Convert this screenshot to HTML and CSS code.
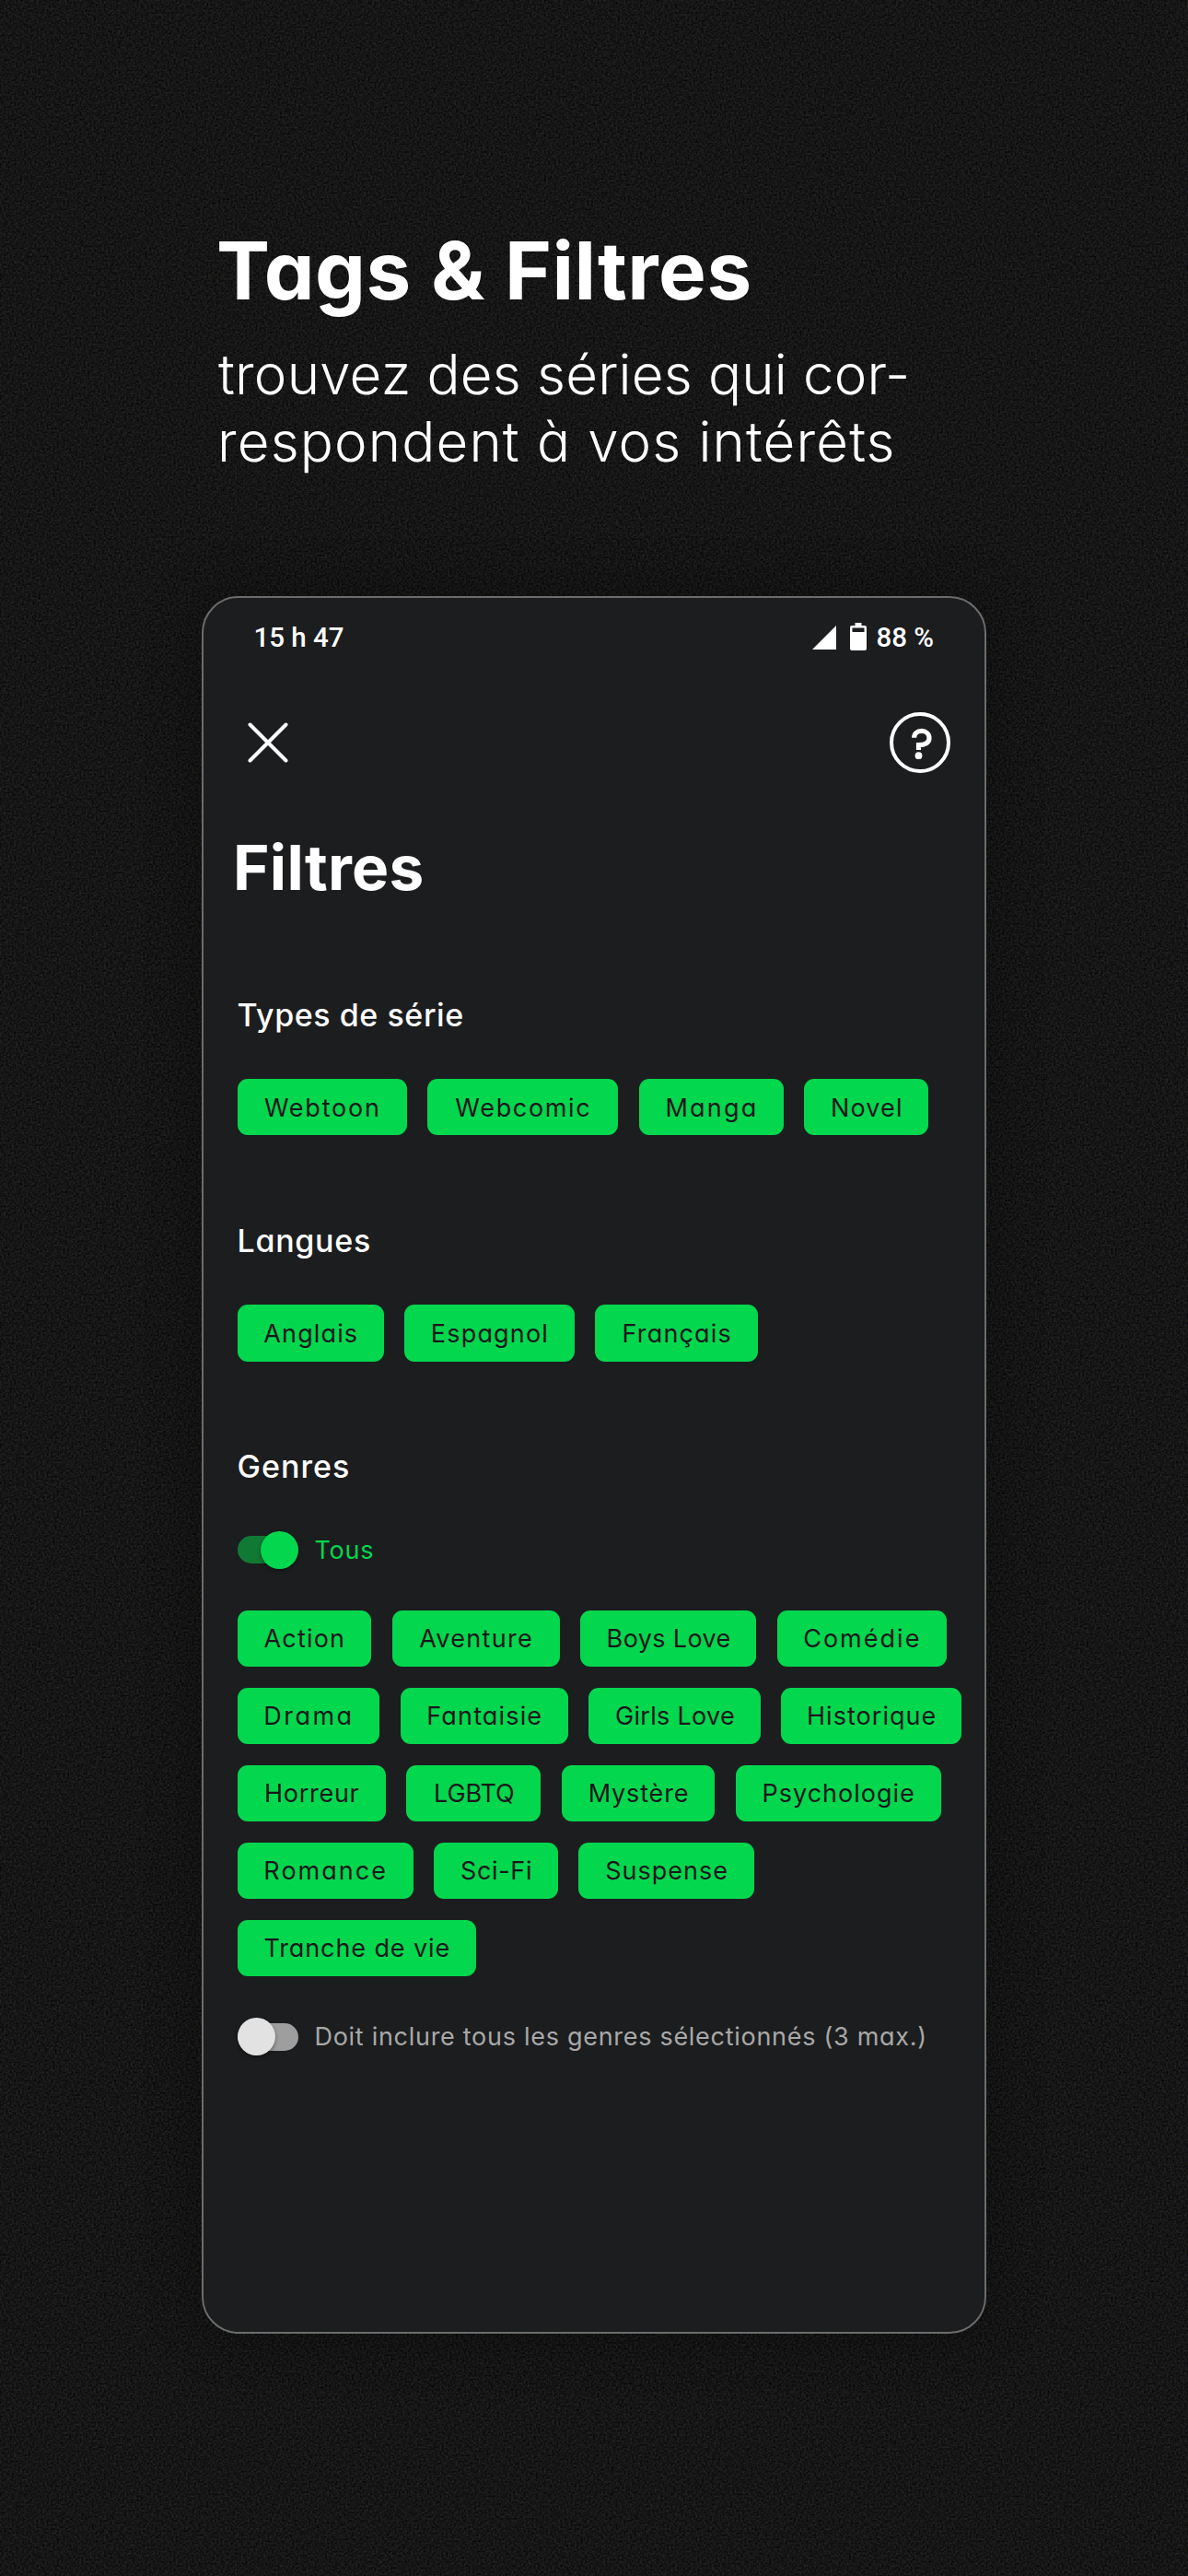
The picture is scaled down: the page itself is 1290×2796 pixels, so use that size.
FILE: index.html
```html
<!DOCTYPE html>
<html lang="fr">
<head>
<meta charset="utf-8">
<title>Tags &amp; Filtres</title>
<link rel="stylesheet" href="styles.css">
</head>
<body>
<svg class="grain" width="1290" height="2796" aria-hidden="true">
  <filter id="grain" x="0" y="0" width="100%" height="100%" color-interpolation-filters="sRGB">
    <feTurbulence type="fractalNoise" baseFrequency="0.45" numOctaves="2" seed="4"/>
    <feColorMatrix values="0.19 0.03 0 0 -0.025  0.17 0.05 0 0 -0.025  0.17 0 0.05 0 -0.025  0 0 0 0 1"/>
  </filter>
  <rect width="1290" height="2796" filter="url(#grain)"/>
</svg>

<main class="page">
  <header class="promo">
    <h1 class="promo-title">Tags &amp; Filtres</h1>
    <p class="promo-text"><span class="line line-first">trouvez des séries qui cor-</span><span class="line line-second">respondent à vos intérêts</span></p>
  </header>

  <section class="phone">
    <div class="status">
      <span class="status-time">15 h 47</span>
      <div class="status-right">
        <svg class="signal" width="26" height="26" viewBox="0 0 26 26"><path d="M26 0V26H0Z" fill="#fff"/></svg>
        <svg class="battery" width="18" height="30" viewBox="0 0 18 30"><path fill="#fff" fill-rule="evenodd" d="M5.500 0h7v3H16a2 2 0 0 1 2 2v23a2 2 0 0 1-2 2H2a2 2 0 0 1-2-2V5a2 2 0 0 1 2-2h3.500zM2.500 5.500V10h13V5.500z"/></svg>
        <span class="status-level">88 %</span>
      </div>
    </div>

    <nav class="toolbar">
      <svg width="44" height="44" viewBox="0 0 44 44" fill="none" stroke="#fff" stroke-width="4" stroke-linecap="round"><path d="M2.500 2.500l39 39M41.500 2.500l-39 39"/></svg>
      <svg width="66" height="66" viewBox="0 0 66 66" fill="none" stroke="#fff"><circle cx="33" cy="33" r="31" stroke-width="4"/><path stroke-width="5.200" d="M26.600 27.700C26.600 23.300 30 20.400 34.700 20.400S43 23.600 43 28.200C43 33 38.500 35.600 31.500 35.600V41"/><circle cx="31.500" cy="47.200" r="3.900" fill="#fff" stroke="none"/></svg>
    </nav>

    <h2 class="title">Filtres</h2>

    <div class="content">
      <section class="group">
        <h3 class="heading heading-types">Types de série</h3>
        <div class="chips">
          <span class="chip webtoon">Webtoon</span><span class="chip webcomic">Webcomic</span><span class="chip manga">Manga</span><span class="chip novel">Novel</span>
        </div>
      </section>

      <section class="group">
        <h3 class="heading heading-langues">Langues</h3>
        <div class="chips">
          <span class="chip anglais">Anglais</span><span class="chip espagnol">Espagnol</span><span class="chip francais">Français</span>
        </div>
      </section>

      <section class="group">
        <h3 class="heading heading-genres">Genres</h3>
        <div class="toggle toggle-on">
          <span class="switch"><span class="thumb"></span></span>
          <span class="toggle-label">Tous</span>
        </div>
        <div class="chips">
          <span class="chip action">Action</span><span class="chip aventure">Aventure</span><span class="chip boys">Boys Love</span><span class="chip comedie">Comédie</span>
          <span class="chip drama">Drama</span><span class="chip fantaisie">Fantaisie</span><span class="chip girls">Girls Love</span><span class="chip historique">Historique</span>
          <span class="chip horreur">Horreur</span><span class="chip lgbtq">LGBTQ</span><span class="chip mystere">Mystère</span><span class="chip psychologie">Psychologie</span>
          <span class="chip romance">Romance</span><span class="chip scifi">Sci-Fi</span><span class="chip suspense">Suspense</span>
          <span class="chip tranche">Tranche de vie</span>
        </div>
        <div class="toggle toggle-off">
          <span class="switch"><span class="thumb"></span></span>
          <span class="toggle-label">Doit inclure tous les genres sélectionnés (3 max.)</span>
        </div>
      </section>
    </div>
  </section>
</main>
</body>
</html>
```
FILE: styles.css
```css
* { box-sizing: border-box; }

body {
  margin: 0;
  background: #151515;
  color: #fff;
  font-family: Inter, "Open Sans", sans-serif;
  font-feature-settings: "cv11" 1;
}

h1, h2, h3, p { margin: 0; }
svg { display: block; flex: none; }

/* Grainy backdrop behind the whole page */
.grain { position: absolute; top: 0; left: 0; z-index: -1; }

.page {
  width: 1290px;
  height: 2796px;
  padding: 249px 219px 0;
  overflow: hidden;
}

/* Promo text */
.promo { height: 398px; padding-left: 16px; }
.promo-title { font-size: 87px; line-height: 90px; font-weight: 660; letter-spacing: 0.5px; white-space: nowrap; }
.promo-text { margin: 31px 0 0 1px; font-size: 60px; line-height: 73px; font-weight: 300; white-space: nowrap; }
.line { display: block; }
.line-first { padding-left: 1px; letter-spacing: 0.2px; }
.line-second { letter-spacing: 1.15px; }

/* Phone frame */
.phone {
  width: 852px;
  height: 1886px;
  padding-top: 25px;
  border: 2px solid #6c6c6c;
  border-radius: 40px;
  background: #1c1d1f;
  box-shadow: 0 0 60px rgba(0, 0, 0, 0.3);
}

.status {
  display: flex;
  justify-content: space-between;
  height: 36px;
  padding: 0 55px 0 54.5px;
  font: 500 29.5px/36px Roboto, sans-serif;
}
.status-right { display: flex; align-items: flex-start; }
.signal { margin: 5px 15px 0 0; }
.battery { margin: 2px 10px 0 0; }

.toolbar {
  display: flex;
  justify-content: space-between;
  align-items: center;
  margin-top: 63px;
  padding: 0 37px 0 47.5px;
}

.title {
  margin: 62.5px 0 0 32px;
  font-size: 67.5px;
  line-height: 80px;
  font-weight: 670;
  letter-spacing: 0.25px;
}

.content { padding: 98px 0 0 36.5px; }
.group + .group { margin-top: 92.4px; }

.heading { font-size: 34px; line-height: 44px; font-weight: 520; margin-bottom: 47.4px; }
.heading-types { letter-spacing: 0.55px; }
.heading-langues { letter-spacing: 0.7px; }
.heading-genres { letter-spacing: 1.05px; }

/* Filter chips */
.chips { display: flex; flex-wrap: wrap; gap: 22.4px; width: 800px; }
.chip {
  display: flex;
  align-items: center;
  justify-content: center;
  height: 61.6px;
  padding: 1px 0 0 1px;
  border-radius: 11px;
  background: #03d74e;
  color: #1a161b;
  font-size: 27px;
  white-space: nowrap;
}
.webtoon { width: 184.5px; letter-spacing: 1.76px; }
.webcomic { width: 207px; letter-spacing: 1.67px; }
.manga { width: 157.3px; letter-spacing: 2.17px; }
.novel { width: 134.7px; letter-spacing: 1.15px; }
.anglais { width: 159.5px; letter-spacing: 1.12px; }
.espagnol { width: 184.2px; letter-spacing: 1.18px; }
.francais { width: 177.5px; letter-spacing: 1.16px; }
.action { width: 145.7px; letter-spacing: 1.17px; }
.aventure { width: 182.2px; letter-spacing: 1.33px; }
.boys { width: 191px; letter-spacing: 0.38px; }
.comedie { width: 184.5px; letter-spacing: 2.02px; }
.drama { width: 154.8px; letter-spacing: 2.43px; }
.fantaisie { width: 182.2px; letter-spacing: 1.15px; }
.girls { width: 186.5px; letter-spacing: 0.31px; }
.historique { width: 196px; letter-spacing: 1.03px; }
.horreur { width: 161.5px; letter-spacing: 0.7px; }
.lgbtq { width: 146px; letter-spacing: -0.1px; }
.mystere { width: 166.5px; letter-spacing: 0.84px; }
.psychologie { width: 223px; letter-spacing: 0.99px; }
.romance { width: 191.5px; letter-spacing: 2.04px; }
.scifi { width: 134.3px; letter-spacing: 0.67px; }
.suspense { width: 191px; letter-spacing: 1px; }
.tranche { width: 259.5px; letter-spacing: 0.89px; }

/* Switch rows */
.toggle { display: flex; align-items: center; gap: 18px; height: 41px; font-size: 27px; font-weight: 380; white-space: nowrap; }
.toggle-on { margin-bottom: 45px; color: #03d74e; letter-spacing: 0.8px; }
.toggle-off { margin-top: 45px; color: #a8a8a8; letter-spacing: 0.71px; }
.switch { display: flex; align-items: center; width: 66px; height: 30px; border-radius: 15px; }
.toggle-on .switch { justify-content: flex-end; background: #107a35; }
.toggle-off .switch { background: #9e9e9e; }
.thumb { flex: none; width: 41px; height: 41px; border-radius: 50%; box-shadow: 0 2px 4px rgba(0, 0, 0, 0.4); }
.toggle-on .thumb { background: #03d74e; }
.toggle-off .thumb { background: #e2e2e2; }
```
